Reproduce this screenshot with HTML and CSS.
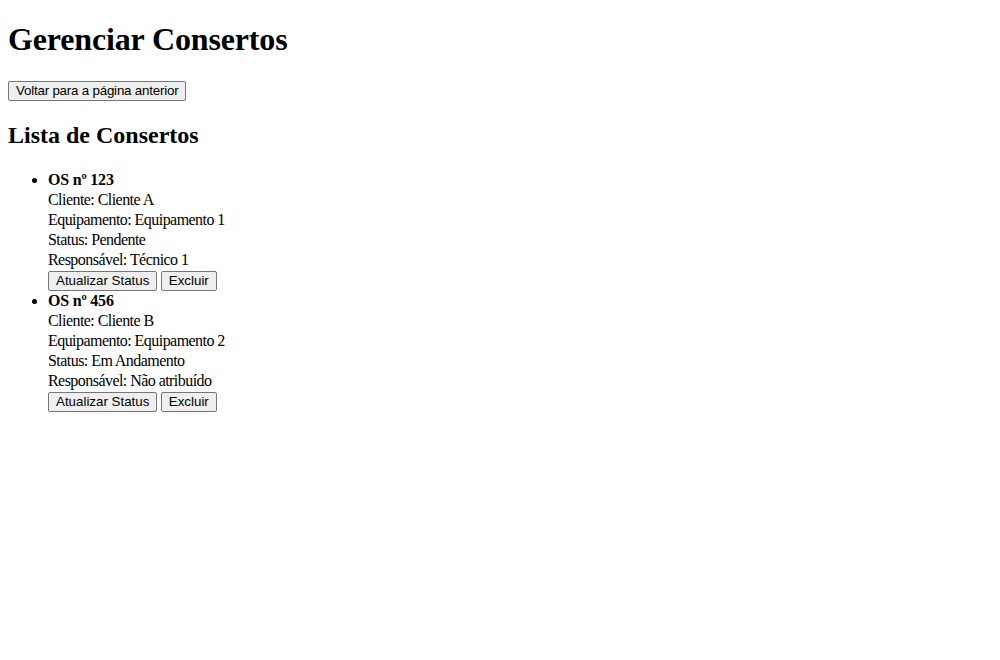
FILE: index.html
```html
<!DOCTYPE html>
<html lang="pt-BR">
<head>
<meta charset="utf-8">
<title>Gerenciar Consertos</title>
<link rel="stylesheet" href="styles.css">
</head>
<body class="page">
<h1 class="title">Gerenciar Consertos</h1>
<button class="btn btn-back">Voltar para a página anterior</button>
<h2 class="subtitle">Lista de Consertos</h2>
<ul class="list">
  <li class="item">
    <strong class="os">OS nº 123</strong><br>
    Cliente: Cliente A<br>
    Equipamento: Equipamento 1<br>
    Status: Pendente<br>
    Responsável: Técnico 1<br>
    <button class="btn">Atualizar Status</button>
    <button class="btn">Excluir</button>
  </li>
  <li class="item">
    <strong class="os">OS nº 456</strong><br>
    Cliente: Cliente B<br>
    Equipamento: Equipamento 2<br>
    Status: Em Andamento<br>
    Responsável: Não atribuído<br>
    <button class="btn">Atualizar Status</button>
    <button class="btn">Excluir</button>
  </li>
</ul>
</body>
</html>
```
FILE: styles.css
```css
.page {
  margin: 8px;
  font-family: "Liberation Serif", "Times New Roman", serif;
  font-size: 16px;
  color: #000;
  background: #fff;
}
.title {
  font-size: 32px;
  font-weight: bold;
  margin: 13px 0 23px;
  letter-spacing: -0.15px;
}
.subtitle {
  font-size: 24px;
  font-weight: bold;
  margin: 21px 0 21px;
}
.list {
  margin: 16px 0;
  padding-left: 40px;
  line-height: 20px;
  letter-spacing: -0.55px;
}
.os {
  letter-spacing: -0.2px;
}
.btn {
  font-family: "Liberation Sans", Arial, sans-serif;
  font-size: 13.33px;
  letter-spacing: 0;
  color: #000;
  background: #efefef;
  border: 1px solid #767676;
  border-radius: 2px;
  padding: 1px 7px;
  line-height: 16px;
}
.btn-back {
  letter-spacing: -0.2px;
}
```
